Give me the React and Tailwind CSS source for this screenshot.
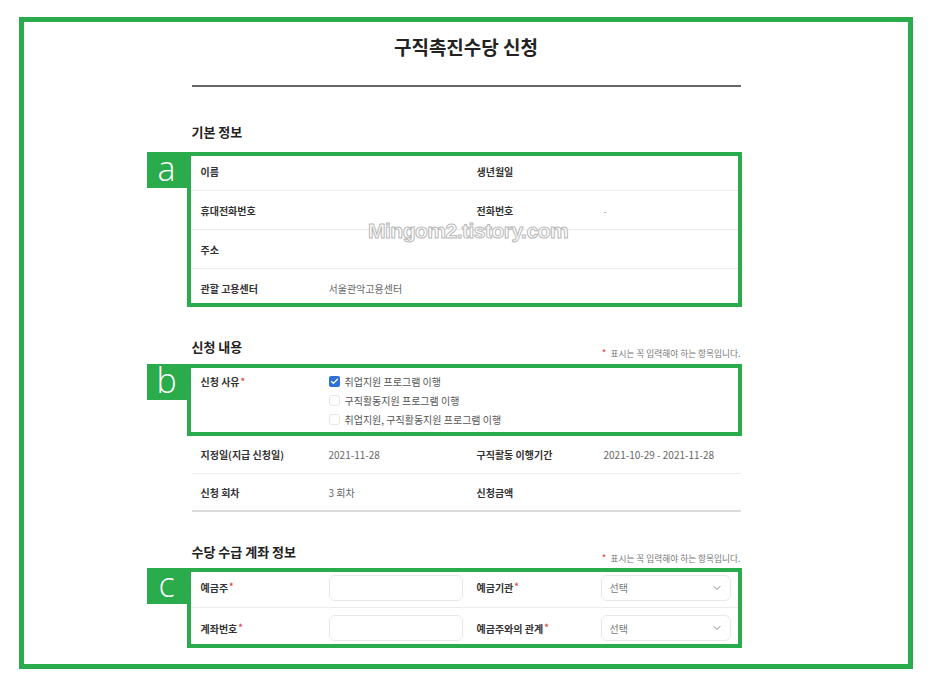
import { ChevronDown, Check } from 'lucide-react';

const FONT = { fontFamily: '"Noto Sans CJK KR", "Noto Sans", sans-serif' };

function Tag({ letter }) {
    return (
        <div className="absolute -left-[45px] top-0 w-[40px] h-[36px] bg-[#2aab4c] flex items-center justify-center">
            <span className="text-white text-[34px] leading-none font-light -mt-[4px] [font-family:'Open_Sans',sans-serif]">{letter}</span>
        </div>
    );
}

function Marked({ letter, className, children }) {
    return (
        <div className={`relative ${className}`}>
            {children}
            <div className="absolute -left-[5px] -right-[1px] top-0 bottom-0 border-4 border-[#2aab4c] pointer-events-none" />
            <Tag letter={letter} />
        </div>
    );
}

function Req() {
    return <span className="text-[#e4463b] text-[9px] align-top ml-[1px]">*</span>;
}

function SectionHead({ title, note, className }) {
    return (
        <div className={`flex items-end justify-between h-[18px] ${className}`}>
            <h2 className="text-[13px] leading-[18px] font-bold text-[#222]">{title}</h2>
            {note && (
                <p className="text-[8.7px] leading-[10px] text-[#777] -mb-[3px]">
                    <span className="text-[#e4463b] text-[10px] mr-[4px]">*</span>표시는 꼭 입력해야 하는 항목입니다.
                </p>
            )}
        </div>
    );
}

const GRID = 'grid grid-cols-[128px_148px_127px_1fr] items-center';

function Row({ cells, className = 'h-[39px] border-b border-[#ececec]' }) {
    return (
        <div className={`${GRID} ${className}`}>
            {cells.map((c, i) => (
                <div
                    key={i}
                    className={`pl-[9px] text-[10px] whitespace-nowrap ${i % 2 === 0 ? 'font-bold text-[#333]' : 'text-[#666]'}`}
                >
                    {c}
                </div>
            ))}
        </div>
    );
}

function Box({ className, children }) {
    return <div className={`h-[26px] border border-[#e8e8e8] rounded-md bg-white ${className}`}>{children}</div>;
}

function SelectBox() {
    return (
        <Box className="w-[130px] -ml-[3px] flex items-center justify-between pl-[8px] pr-[7px]">
            <span className="text-[10px] text-[#777]">선택</span>
            <ChevronDown className="h-3 w-3 text-[#888]" strokeWidth={2} />
        </Box>
    );
}

function CheckLine({ checked, label }) {
    return (
        <div className="flex items-center gap-[5px] h-[19px] text-[10px] text-[#555]">
            {checked ? (
                <span className="h-[11px] w-[11px] rounded-[2px] bg-[#2f6fd6] flex items-center justify-center">
                    <Check className="h-[9px] w-[9px] text-white" strokeWidth={3.5} />
                </span>
            ) : (
                <span className="h-[11px] w-[11px] rounded-[3px] border border-[#e6e6e6] bg-white" />
            )}
            {label}
        </div>
    );
}

export default function App() {
    return (
        <div className="relative w-[940px] h-[689px] bg-white overflow-hidden" style={FONT}>
            <div className="mt-[17px] ml-[19px] w-[894px] h-[652px] border-[5px] border-[#2aab4c] flex flex-col items-center">
                <div className="w-[549px]">

                    {/* Title */}
                    <h1 className="mt-[14px] text-center text-[19px] leading-[22px] font-bold text-[#222]">구직촉진수당 신청</h1>
                    <div className="mt-[27px] h-[2px] bg-[#666]" />

                    {/* 기본 정보 */}
                    <SectionHead title="기본 정보" className="mt-[36px]" />
                    <Marked letter="a" className="mt-[11px]">
                        <Row cells={['이름', '', '생년월일', '']} />
                        <Row cells={['휴대전화번호', '', '전화번호', <span className="text-[#aaa]">-</span>]} />
                        <Row cells={['주소', '', '', '']} />
                        <Row cells={['관할 고용센터', '서울관악고용센터', '', '']} className="h-[38px]" />
                    </Marked>

                    {/* 신청 내용 */}
                    <SectionHead title="신청 내용" note className="mt-[31px]" />
                    <Marked letter="b" className="mt-[8px]">
                        <div className={`${GRID} !items-start h-[72px] border-b border-[#ececec] pt-[8px]`}>
                            <div className="pl-[9px] text-[10px] leading-[19px] font-bold text-[#333]">신청 사유<Req /></div>
                            <div className="pl-[9px] col-span-3">
                                <CheckLine checked label="취업지원 프로그램 이행" />
                                <CheckLine label="구직활동지원 프로그램 이행" />
                                <CheckLine label="취업지원, 구직활동지원 프로그램 이행" />
                            </div>
                        </div>
                    </Marked>
                    <Row cells={['지정일(지급 신청일)', '2021-11-28', '구직활동 이행기간', '2021-10-29 - 2021-11-28']} className="h-[38px] border-b border-[#ececec]" />
                    <Row cells={['신청 회차', '3 회차', '신청금액', '']} className="h-[38px] border-b-2 border-[#dcdcdc]" />

                    {/* 수당 수급 계좌 정보 */}
                    <SectionHead title="수당 수급 계좌 정보" note className="mt-[31px]" />
                    <Marked letter="c" className="mt-[7px]">
                        <Row
                            cells={[<>예금주<Req /></>, <Box className="w-[134px]" />, <>예금기관<Req /></>, <SelectBox />]}
                            className="h-[40px] border-b border-[#ececec]"
                        />
                        <Row
                            cells={[<>계좌번호<Req /></>, <Box className="w-[134px]" />, <>예금주와의 관계<Req /></>, <SelectBox />]}
                            className="h-[40px]"
                        />
                    </Marked>
                </div>
            </div>

            {/* Watermark */}
            <div className="absolute left-[368px] top-[219px] w-[200px] text-center text-[21px] leading-[24px] font-bold tracking-[-0.5px] text-white/80 [-webkit-text-stroke:1px_#b8b8b8] [font-family:'Liberation_Sans',sans-serif] pointer-events-none">
                Mingom2.tistory.com
            </div>
        </div>
    );
}
